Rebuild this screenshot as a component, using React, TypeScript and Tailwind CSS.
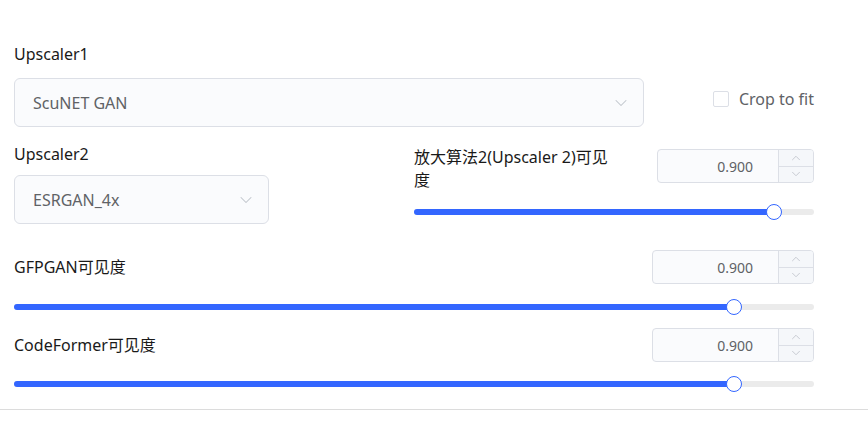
import { ChevronDown, ChevronUp } from 'lucide-react';

const font = { fontFamily: '"Noto Sans", "Noto Sans CJK SC", sans-serif' };

function Select({ value, w }: { value: string; w: string }) {
  return (
    <div className={`${w} h-[49px] flex items-center justify-between rounded-md border border-[#dcdfe6] bg-[#fafbfd] pl-[18px] pr-[12px]`}>
      <span className="text-[16px] text-[#606266]">{value}</span>
      <ChevronDown className="w-[20px] h-[20px] text-[#c0c4cc]" strokeWidth={1.25} />
    </div>
  );
}

function NumberBox({ value, w }: { value: string; w: string }) {
  return (
    <div className={`${w} h-[34px] flex rounded border border-[#dcdfe6] bg-[#fafbfd] overflow-hidden`}>
      <div className="flex-1 flex items-center justify-end pr-[25px] text-[14px] text-[#606266]">{value}</div>
      <div className="w-[35px] flex flex-col border-l border-[#dcdfe6] bg-[#f5f7fa]">
        <div className="flex-1 flex items-center justify-center border-b border-[#dcdfe6]">
          <ChevronUp className="w-[14px] h-[14px] text-[#c0c4cc]" strokeWidth={1.5} />
        </div>
        <div className="flex-1 flex items-center justify-center">
          <ChevronDown className="w-[14px] h-[14px] text-[#c0c4cc]" strokeWidth={1.5} />
        </div>
      </div>
    </div>
  );
}

function Slider({ pct }: { pct: number }) {
  return (
    <div className="relative h-[6px] w-full rounded-full bg-[#ebebeb]">
      <div className="h-full rounded-full bg-[#3366ff]" style={{ width: `${pct}%` }} />
      <div
        className="absolute top-1/2 w-[16px] h-[16px] -translate-x-1/2 -translate-y-1/2 rounded-full border-[1.5px] border-[#3366ff] bg-white"
        style={{ left: `${pct}%` }}
      />
    </div>
  );
}

export default function App() {
  return (
    <div className="w-[868px] h-[421px] bg-white text-[#1a1a1a]" style={font}>
      <div className="w-[800px] ml-[14px] pt-[42px]">
        {/* row 1 */}
        <div className="flex">
          <div className="w-[630px]">
            <div className="text-[16px] leading-[24px]">Upscaler1</div>
            <div className="mt-[12px]"><Select value="ScuNET GAN" w="w-[630px]" /></div>
          </div>
          <div className="flex-1 flex items-center justify-end pt-[28px]">
            <div className="flex items-center gap-[10px]">
              <div className="w-[16px] h-[16px] rounded-[2px] border border-[#dcdfe6] bg-white" />
              <span className="text-[16px] text-[#606266]">Crop to fit</span>
            </div>
          </div>
        </div>

        {/* row 2 */}
        <div className="flex mt-[15px]">
          <div className="w-[400px]">
            <div className="text-[16px] leading-[24px]">Upscaler2</div>
            <div className="mt-[9px]"><Select value="ESRGAN_4x" w="w-[255px]" /></div>
          </div>
          <div className="w-[400px] pt-[4px]">
            <div className="flex justify-between items-start">
              <div className="w-[205px] text-[16px] leading-[23px]">放大算法2(Upscaler 2)可见度</div>
              <div className="pt-[3px]"><NumberBox value="0.900" w="w-[157px]" /></div>
            </div>
            <div className="mt-[17px]"><Slider pct={90} /></div>
          </div>
        </div>

        {/* GFPGAN */}
        <div className="mt-[26px] flex items-center justify-between">
          <div className="text-[16px] leading-[24px]">GFPGAN可见度</div>
          <NumberBox value="0.900" w="w-[162px]" />
        </div>
        <div className="mt-[20px]"><Slider pct={90} /></div>

        {/* CodeFormer */}
        <div className="mt-[18px] flex items-center justify-between">
          <div className="text-[16px] leading-[24px]">CodeFormer可见度</div>
          <NumberBox value="0.900" w="w-[162px]" />
        </div>
        <div className="mt-[19px]"><Slider pct={90} /></div>
      </div>
      <div className="mt-[22px] h-px bg-[#dcdcdc]" />
    </div>
  );
}
